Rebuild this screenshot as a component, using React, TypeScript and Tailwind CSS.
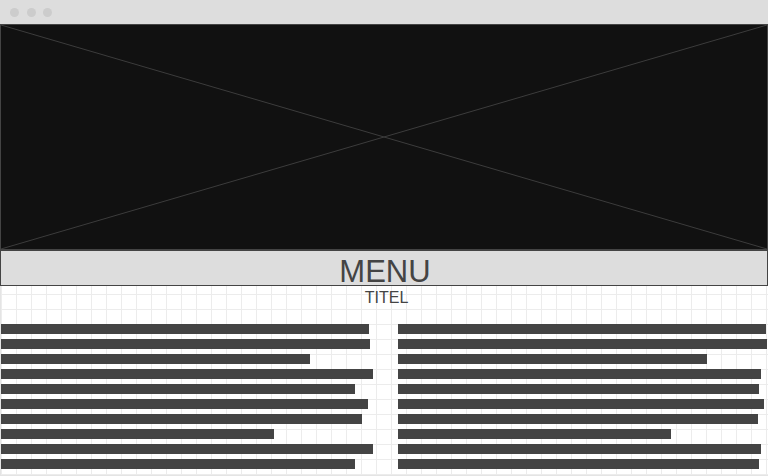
import React from "react";

const leftBars = [368, 369, 309, 372, 354, 367, 361, 273, 372, 354];
const rightBars = [368, 369, 309, 363, 361, 366, 360, 273, 363, 361];

function Bars({ widths }: { widths: number[] }) {
  return (
    <div className="flex flex-col gap-[5px]">
      {widths.map((w, i) => (
        <div key={i} className="h-[10px] bg-[#444444]" style={{ width: w }} />
      ))}
    </div>
  );
}

export default function App() {
  return (
    <div className="w-[768px] h-[476px] overflow-hidden bg-white flex flex-col font-['Liberation_Sans',Arial,sans-serif] text-[#444444]">
      {/* window title bar */}
      <div className="h-[24px] shrink-0 bg-[#dddddd] flex items-center gap-[7.5px] pl-[10px]">
        <div className="w-[9px] h-[9px] rounded-full bg-[#cccccc]" />
        <div className="w-[9px] h-[9px] rounded-full bg-[#cccccc]" />
        <div className="w-[9px] h-[9px] rounded-full bg-[#cccccc]" />
      </div>

      {/* image placeholder */}
      <div className="relative h-[226px] shrink-0 bg-[#111111] border border-[#444444]">
        <svg className="absolute inset-0 w-full h-full" viewBox="0 0 766 224" preserveAspectRatio="none">
          <line x1="0" y1="0" x2="766" y2="224" stroke="#3c3c3c" strokeWidth="1" />
          <line x1="766" y1="0" x2="0" y2="224" stroke="#3c3c3c" strokeWidth="1" />
        </svg>
      </div>

      {/* menu bar */}
      <div className="h-[36px] shrink-0 bg-[#dddddd] border border-[#444444] flex justify-center">
        <div className="pt-[5px] text-[31px] leading-[31px] pl-[2px]">MENU</div>
      </div>

      {/* grid content */}
      <div className="flex-1 border-l border-b border-[#e4e4e4] bg-[linear-gradient(to_right,#ececec_1px,transparent_1px),linear-gradient(to_bottom,#ececec_1px,transparent_1px)] bg-[size:15px_15px] bg-[position:0px_8px]">
        <div className="pt-[3px] text-center text-[16px] leading-[18px] pl-[4px]">TITEL</div>
        <div className="mt-[17px] flex">
          <div className="w-[397px]">
            <Bars widths={leftBars} />
          </div>
          <div>
            <Bars widths={rightBars} />
          </div>
        </div>
      </div>
    </div>
  );
}
